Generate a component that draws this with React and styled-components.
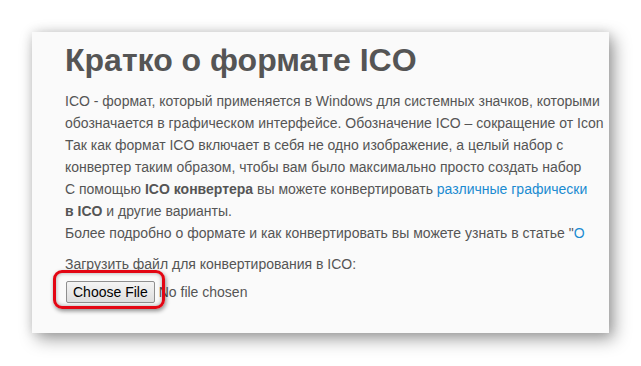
import React from 'react'
import styled, { createGlobalStyle } from 'styled-components'

const Global = createGlobalStyle`
  html, body {
    margin: 0;
    padding: 0;
    background: #fff;
  }
  body {
    width: 641px;
    height: 366px;
    overflow: hidden;
    font-family: 'Liberation Sans', Arial, sans-serif;
  }
`

const Page = styled.div`
  padding: 32px 32px 0 32px;
`

const Panel = styled.section`
  width: 577px;
  height: 301px;
  background: #fafafa;
  box-shadow: 5px 6px 16px rgba(0, 0, 0, 0.38), 0 0 10px rgba(0, 0, 0, 0.12);
  overflow: hidden;
  box-sizing: border-box;
  padding: 9px 0 0 33px;
  color: #555;
`

const Title = styled.h1`
  margin: 0 0 11px 0;
  font-size: 32px;
  font-weight: bold;
  line-height: 38px;
  color: #555;
  white-space: nowrap;
`

const Text = styled.div`
  font-size: 14px;
  line-height: 22px;
`

const Line = styled.div`
  white-space: nowrap;
`

const Link = styled.a`
  color: #1a8bd1;
  text-decoration: none;
`

const Upload = styled.div`
  margin-top: 10px;
  font-size: 14px;
  line-height: 20px;
`

const FileRow = styled.div`
  position: relative;
  display: flex;
  align-items: center;
  gap: 4px;
  margin-top: 7px;
  font-size: 14px;
`

const FileButton = styled.button`
  font-family: 'Liberation Sans', Arial, sans-serif;
  font-size: 14px;
  color: #000;
  height: 22px;
  padding: 0 6px;
  margin-left: 1px;
  border: 1px solid #8f8f8f;
  border-radius: 2px;
  background: linear-gradient(#f4f4f4, #dedede);
`

const Highlight = styled.span`
  position: absolute;
  left: -12px;
  top: -11px;
  width: 106px;
  height: 33px;
  border: 3px solid #e30613;
  border-radius: 9px;
  box-shadow: 1px 2px 4px rgba(0, 0, 0, 0.45), inset 0 0 4px rgba(0, 0, 0, 0.35);
  pointer-events: none;
`

export default function App() {
  return (
    <>
      <Global />
      <Page>
        <Panel>
          <Title>Кратко о формате ICO</Title>
          <Text>
            <Line>ICO - формат, который применяется в Windows для системных значков, которыми</Line>
            <Line>обозначается в графическом интерфейсе. Обозначение ICO – сокращение от Icon</Line>
            <Line>Так как формат ICO включает в себя не одно изображение, а целый набор с</Line>
            <Line>конвертер таким образом, чтобы вам было максимально просто создать набор</Line>
            <Line>
              С помощью <b>ICO конвертера</b> вы можете конвертировать{' '}
              <Link href='#'>различные графически</Link>
            </Line>
            <Line>
              <b>в ICO</b> и другие варианты.
            </Line>
            <Line>
              Более подробно о формате и как конвертировать вы можете узнать в статье "<Link href='#'>О</Link>
            </Line>
          </Text>
          <Upload>Загрузить файл для конвертирования в ICO:</Upload>
          <FileRow>
            <FileButton>Choose File</FileButton>
            <span>No file chosen</span>
            <Highlight />
          </FileRow>
        </Panel>
      </Page>
    </>
  )
}
